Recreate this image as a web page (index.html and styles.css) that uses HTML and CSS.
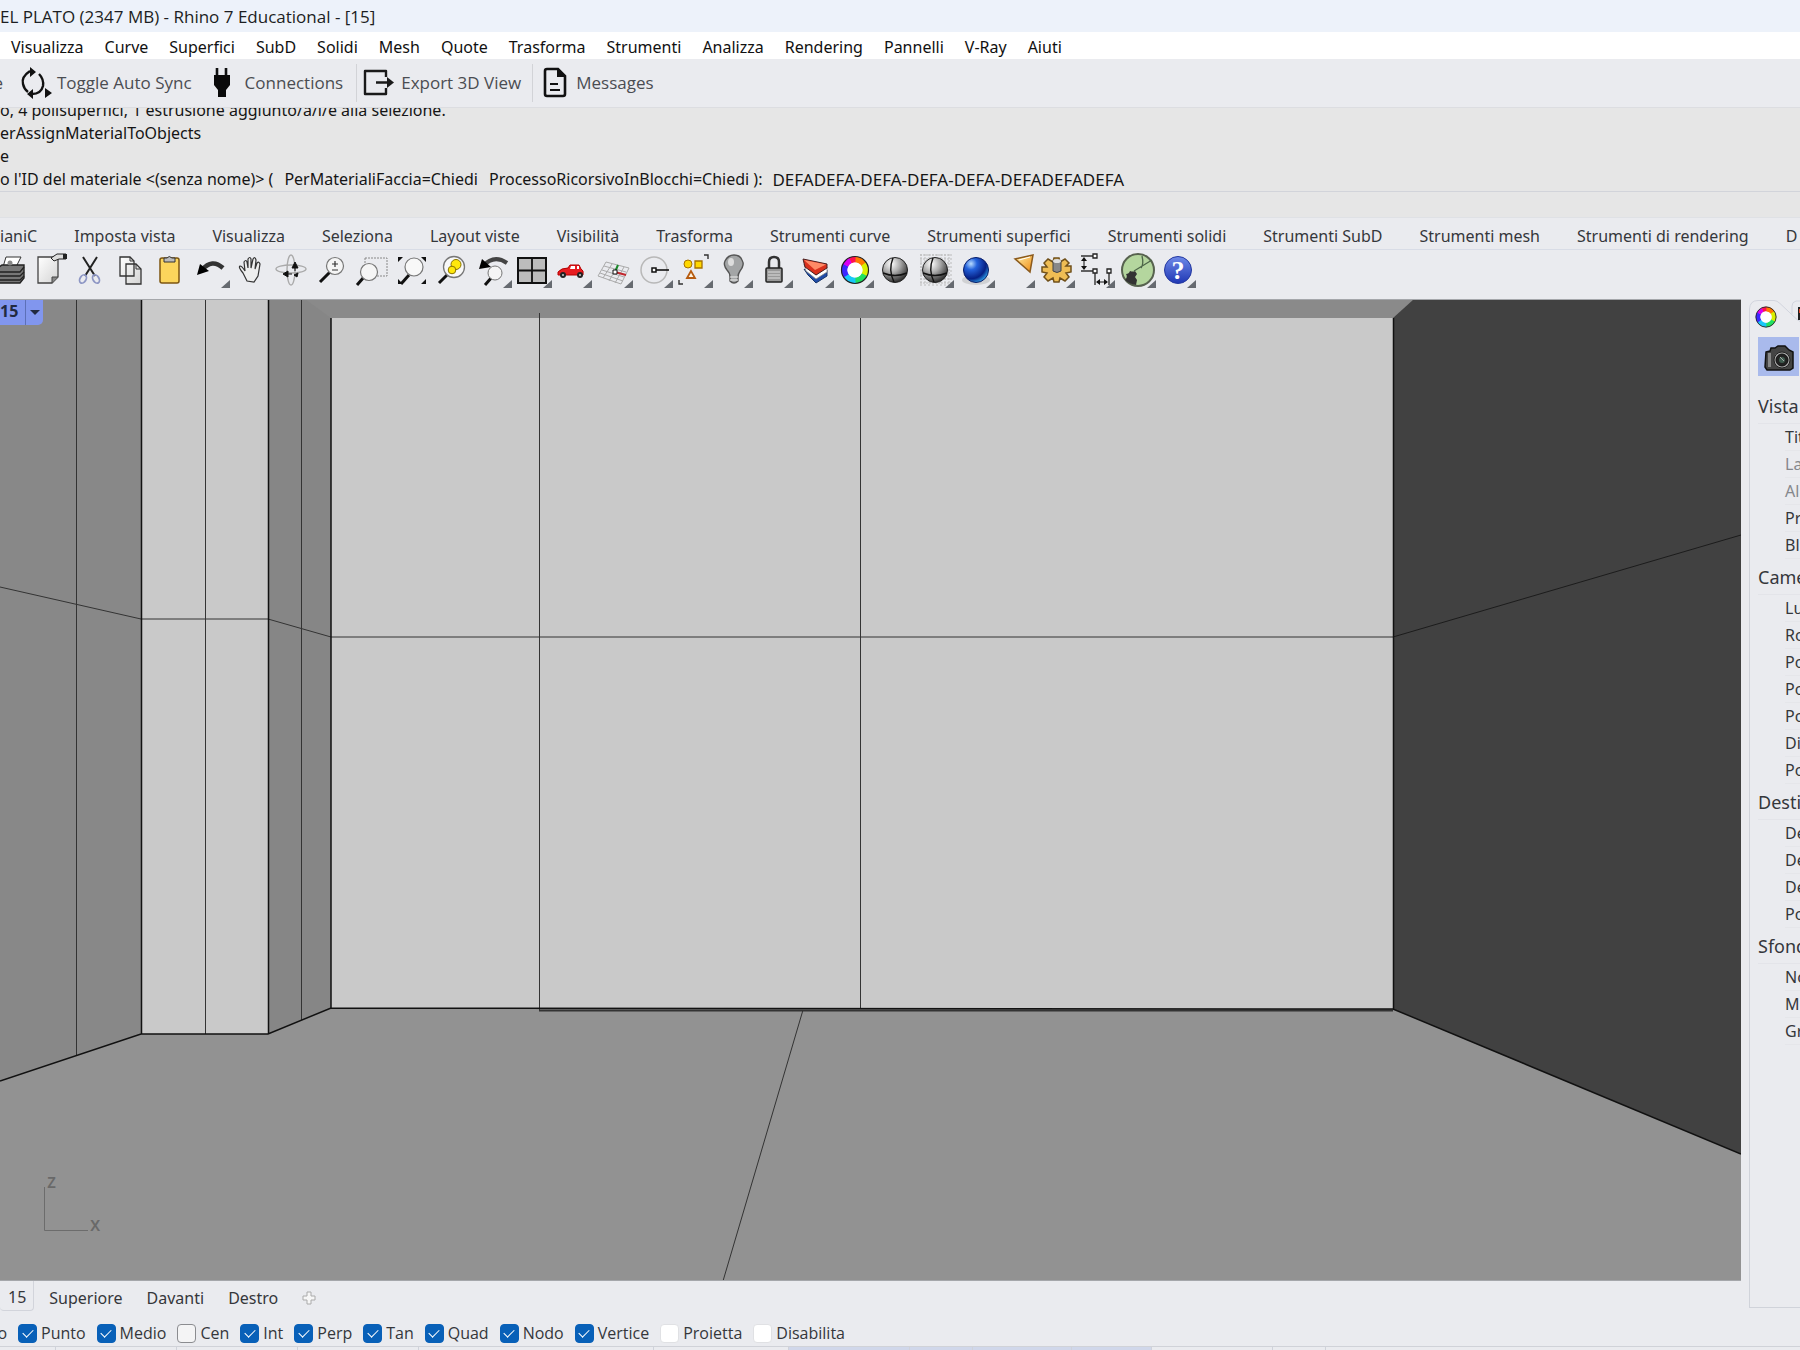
FILE: index.html
```html
<!DOCTYPE html>
<html lang="it">
<head>
<meta charset="utf-8">
<title>EL PLATO - Rhino 7 Educational</title>
<link rel="stylesheet" href="styles.css">
</head>
<body>
<svg class="defs" aria-hidden="true">
  <defs>
    <linearGradient id="paper" x2="1" y2="1"><stop offset="0" stop-color="#fff"/><stop offset="1" stop-color="#d4d4d4"/></linearGradient>
    <radialGradient id="grey" cx=".35" cy=".25" r=".8"><stop offset="0" stop-color="#fff"/><stop offset=".45" stop-color="#aaa"/><stop offset="1" stop-color="#222"/></radialGradient>
    <radialGradient id="blue" cx=".3" cy=".25" r=".8"><stop offset="0" stop-color="#b8dcff"/><stop offset=".3" stop-color="#2462dc"/><stop offset=".75" stop-color="#062084"/><stop offset="1" stop-color="#2b9be4"/></radialGradient>
    <linearGradient id="help" y2="1" x2="0"><stop offset="0" stop-color="#6f8ae8"/><stop offset="1" stop-color="#1f37b4"/></linearGradient>
    <linearGradient id="gold" x2="1" y2="1"><stop offset="0" stop-color="#fff0a8"/><stop offset="1" stop-color="#f08a10"/></linearGradient>
    <symbol id="more" viewBox="0 0 40 40"><path d="M38 30v8h-9z" fill="#666a70"/></symbol>
    <symbol id="ball" viewBox="0 0 40 40"><circle cx="20" cy="20" r="12.5" fill="url(#grey)" stroke="#222"/><path d="M18 8q-5 12 1 24M8 23q12 5 24 0" fill="none" stroke="#111" stroke-width="1.4"/></symbol>
    <symbol id="wheel" viewBox="0 0 40 40">
      <g fill="none" stroke-width="6">
        <path d="M20 9.500A10.500 10.500 0 0 1 29.100 14.750" stroke="#ff7a00"/><path d="M28.600 14A10.500 10.500 0 0 1 29.100 25.250" stroke="#d8f000"/>
        <path d="M29.400 24.700A10.500 10.500 0 0 1 20 30.500" stroke="#22e060"/><path d="M20.500 30.500A10.500 10.500 0 0 1 10.900 25.250" stroke="#18c8f8"/>
        <path d="M11.200 25.800A10.500 10.500 0 0 1 10.900 14.750" stroke="#3c28ff"/><path d="M10.600 15.300A10.500 10.500 0 0 1 16 10.300" stroke="#d800f0"/><path d="M15.500 10.500A10.500 10.500 0 0 1 20.500 9.500" stroke="#ff1050"/>
      </g><circle cx="20" cy="20" r="13.500" fill="none" stroke="#222" stroke-width="1.200"/><circle cx="20" cy="20" r="7.500" fill="#fff"/>
    </symbol>
  </defs>
</svg>

<header class="titlebar">EL PLATO (2347 MB) - Rhino 7 Educational - [15]</header>

<nav class="menubar">
  <button>Visualizza</button><button>Curve</button><button>Superfici</button><button>SubD</button><button>Solidi</button><button>Mesh</button><button>Quote</button><button>Trasforma</button><button>Strumenti</button><button>Analizza</button><button>Rendering</button><button>Pannelli</button><button>V-Ray</button><button>Aiuti</button>
</nav>

<div class="syncbar">
  <span class="cut">e</span>
  <button class="sync">
    <svg width="34" height="34" viewBox="0 0 34 34"><g fill="none" stroke="#111" stroke-width="2.400"><path d="M11 5Q2 11 4 18q1 5 5 8M13 28q9 0 11-8 1-7-4-12"/></g><path d="M11 1l6 5-6 5zM14 23l-6 5 6 5zM26 22l7 5-7 5z" fill="#111"/></svg>
    Toggle Auto Sync</button>
  <button class="plug">
    <svg width="20" height="32" viewBox="0 0 20 32"><path d="M5 1v9M14 1v9" stroke="#111" stroke-width="2.600"/><path d="M2 8h16v10l-4 5v7H6v-7l-4-5z" fill="#0a0a0a"/></svg>
    Connections</button>
  <button class="export">
    <svg width="32" height="28" viewBox="0 0 32 28"><path d="M23 8V2H2v23h21v-6M13 13.500h14" fill="none" stroke="#1a1a1a" stroke-width="2.400" stroke-linejoin="round"/><path d="M24 8l7 5.500-7 5.500z" fill="#1a1a1a"/></svg>
    Export 3D View</button>
  <button class="messages">
    <svg width="24" height="34" viewBox="0 0 24 34"><path d="M4 3h11l7 7v18q0 2-2 2H4q-2 0-2-2V5q0-2 2-2z" fill="none" stroke="#111" stroke-width="2.600"/><path d="M14 3v8h8z" fill="#111"/><path d="M7 18h8M7 24h10" stroke="#111" stroke-width="2.200"/></svg>
    Messages</button>
</div>

<section class="console">
  <div class="history">
    <p>o, 4 polisuperfici, 1 estrusione aggiunto/a/i/e alla selezione.</p>
    <p>erAssignMaterialToObjects</p>
    <p>e</p>
    <p class="prompt"><span>o l'ID del materiale &lt;(senza nome)&gt; (</span> <span>PerMaterialiFaccia=Chiedi</span> <span>ProcessoRicorsivoInBlocchi=Chiedi ):</span> <span class="entry">DEFADEFA-DEFA-DEFA-DEFA-DEFADEFADEFA</span></p>
  </div>
</section>

<nav class="tabs">
  <button>ianiC</button><button>Imposta vista</button><button>Visualizza</button><button>Seleziona</button><button>Layout viste</button><button>Visibilità</button><button>Trasforma</button><button>Strumenti curve</button><button>Strumenti superfici</button><button>Strumenti solidi</button><button>Strumenti SubD</button><button>Strumenti mesh</button><button>Strumenti di rendering</button><button>D</button>
</nav>

<div class="tools">
  <div class="toolgrid">
  <button aria-label="Stampa"><svg viewBox="0 0 40 40"><path d="M12 17l3-10h15l-5 10" fill="#fff" stroke="#333"/><path d="M4 20l7-5h22v13l-4 5H4z" fill="#777" stroke="#222" stroke-width="1.400"/><path d="M4 22h25l4-5M4 26h25l4-4M4 30h25l4-4" fill="none" stroke="#222" stroke-width="1.300"/><circle cx="19" cy="13" r="2.500" fill="#888"/></svg></button>
  <button aria-label="Proprietà"><svg viewBox="0 0 40 40"><path d="M7 7h20v20l-6 6H7z" fill="url(#paper)" stroke="#444" stroke-width="1.300"/><path d="M27 27h-6v6" fill="#888" stroke="#444"/><path d="M20 8l6-4h9v5h-7l-5 2z" fill="#ddd" stroke="#222"/><path d="M32 4h4v5h-4z" fill="#222"/></svg></button>
  <button aria-label="Taglia"><svg viewBox="0 0 40 40"><path d="M12 7l12 19M26 7L14 26" stroke="#222" stroke-width="2"/><ellipse cx="12" cy="29" rx="3" ry="4.500" transform="rotate(30 12 29)" fill="none" stroke="#8d96c4" stroke-width="1.800"/><ellipse cx="25" cy="29" rx="3" ry="4.500" transform="rotate(-30 25 29)" fill="none" stroke="#8d96c4" stroke-width="1.800"/></svg></button>
  <button aria-label="Copia"><svg viewBox="0 0 40 40"><path d="M8 7h10l4 4v15H8zM14 14h10l5 5v15H14z" fill="url(#paper)" stroke="#333" stroke-width="1.300"/><path d="M18 7v4h4M24 14v5h5" fill="none" stroke="#333"/></svg></button>
  <button aria-label="Incolla"><svg viewBox="0 0 40 40"><rect x="8" y="8" width="19" height="25" rx="2" fill="#fbd55c" stroke="#7d5610" stroke-width="1.500"/><path d="M12 12V8h3q2-3 5 0h3v4z" fill="#bbb" stroke="#333"/></svg></button>
  <button aria-label="Annulla"><svg viewBox="0 0 40 40"><path d="M10 20Q20 8 31 18" fill="none" stroke="#333" stroke-width="4.500"/><path d="M5 25l3-11 9 7z" fill="#000"/><use href="#more"/></svg></button>
  <button aria-label="Panoramica"><svg viewBox="0 0 40 40"><path d="M15 31l-4-8q-5-6-3-7 2 0 5 5l-1-9q2-3 3 0l1 6V9q2-3 3 0v9l2-9q2-3 3 1l-1 9 2-6q2-2 3 1l-2 12-4 6z" fill="#eee" stroke="#333" stroke-width="1.200"/></svg></button>
  <button aria-label="Ruota vista"><svg viewBox="0 0 40 40"><g fill="none" stroke="#aaa" stroke-width="1.400"><ellipse cx="18" cy="20" rx="4" ry="15"/><ellipse cx="18" cy="19" rx="15" ry="4"/></g><path d="M22 12l3 6h-6zM22 18v3M10 24l5-3v6zM15 24h4M21 25l4-2-1 4z" fill="#111" stroke="#111"/></svg></button>
  <button aria-label="Zoom"><svg viewBox="0 0 40 40"><path d="M17 22L7 32" stroke="#111" stroke-width="3"/><circle cx="22" cy="16" r="8.500" fill="#f5f5f5" stroke="#777" stroke-width="1.200"/><path d="M22 11v6M19 14h6M19 20h6" stroke="#333" stroke-width="1.200"/></svg></button>
  <button aria-label="Zoom finestra"><svg viewBox="0 0 40 40"><path d="M12 8h22v18H12z" fill="none" stroke="#888" stroke-dasharray="2 1"/><path d="M11 27l-7 8" stroke="#111" stroke-width="3"/><circle cx="16" cy="22" r="8.500" fill="#f5f5f5" stroke="#777" stroke-width="1.200"/></svg></button>
  <button aria-label="Zoom estensione"><svg viewBox="0 0 40 40"><path d="M16 25l-8 9" stroke="#111" stroke-width="3"/><circle cx="21" cy="17" r="9" fill="#f8f8f8" stroke="#777" stroke-width="1.200"/><path d="M5 7h5l-5 5zM28 7h5v5zM5 29v5h5zM33 29v5h-5z" fill="#111"/></svg></button>
  <button aria-label="Zoom selezione"><svg viewBox="0 0 40 40"><path d="M13 25l-8 8" stroke="#111" stroke-width="3"/><circle cx="20" cy="17" r="10.500" fill="#f8f8f8" stroke="#777" stroke-width="1.300"/><circle cx="22" cy="14.500" r="5" fill="#ffe80c" stroke="#887200"/><circle cx="18" cy="20" r="3.800" fill="#ffe80c" stroke="#887200"/></svg></button>
  <button aria-label="Vista precedente"><svg viewBox="0 0 40 40"><path d="M9 16Q20 4 33 13" fill="none" stroke="#444" stroke-width="4"/><path d="M5 19l3-10 9 8z" fill="#000"/><path d="M18 27l-7 8" stroke="#111" stroke-width="3"/><circle cx="21" cy="23" r="7" fill="#f5f5f5" stroke="#777"/><use href="#more"/></svg></button>
  <button aria-label="4 viste"><svg viewBox="0 0 40 40"><path d="M4 8h28v25H4z" fill="#bcbcbc" stroke="#111" stroke-width="2"/><path d="M18 8v25M4 20.500h28" stroke="#111" stroke-width="1.800"/><use href="#more"/></svg></button>
  <button aria-label="Veicolo"><svg viewBox="0 0 40 40"><path d="M4 22q3-4 10-4l2-3h9l2 4q3 1 2 6H4z" fill="#e81c20" stroke="#b40000"/><path d="M17 16h4v3h-5zM23 16h2v3h-2z" fill="#fff"/><circle cx="9" cy="25" r="3" fill="#222"/><circle cx="26" cy="25" r="3" fill="#222"/><circle cx="9" cy="25" r="1" fill="#ccc"/><circle cx="26" cy="25" r="1" fill="#ccc"/><use href="#more"/></svg></button>
  <button aria-label="Piano di costruzione"><svg viewBox="0 0 40 40"><path d="M11 12l23 6-8 16L3 26zM17 14l-9 14M23 15l-9 16M29 17l-9 16M9 16l22 6M7 20l22 7M5 23l23 8" fill="none" stroke="#aaa"/><path d="M20 22l3-7" stroke="#1b8b2b" stroke-width="2"/><path d="M20 22l11 3" stroke="#c1272d" stroke-width="2"/><path d="M18 20h4v4h-4z" fill="#fff" stroke="#111"/><use href="#more"/></svg></button>
  <button aria-label="Snap polare"><svg viewBox="0 0 40 40"><circle cx="19" cy="20" r="13" fill="none" stroke="#b8b8b8" stroke-width="1.500"/><path d="M20 20h14" stroke="#111" stroke-width="1.600"/><path d="M17 18h4v4h-4z" fill="#fff" stroke="#111" stroke-width="1.500"/><use href="#more"/></svg></button>
  <button aria-label="Selezione"><svg viewBox="0 0 40 40"><circle cx="13" cy="14" r="4" fill="#ffd800" stroke="#a67100"/><path d="M20 11h7v7h-7z" fill="#ffd800" stroke="#a67100" stroke-width="1.300"/><path d="M16 21l-4 7h8z" fill="#fff4e0" stroke="#b65b10" stroke-width="1.800"/><path d="M29 5h4v4M4 30v4h4" fill="none" stroke="#333" stroke-width="1.400"/><use href="#more"/></svg></button>
  <button aria-label="Mostra"><svg viewBox="0 0 40 40"><g transform="translate(-1 0)"><path d="M16 27q0-4-3-7-4-5-2-9 3-6 9-6t8 5q3 5-2 11-2 3-2 6v4q-4 4-8 0z" fill="#a3a5a6" stroke="#555" stroke-width="1.400"/><path d="M16 27h8M16 30h8" stroke="#eee"/><ellipse cx="17" cy="12" rx="3" ry="4" fill="#ddd"/></g><use href="#more"/></svg></button>
  <button aria-label="Blocca"><svg viewBox="0 0 40 40"><path d="M14 18v-6q0-5 5-5t5 5v6" fill="none" stroke="#333" stroke-width="2.500"/><rect x="11" y="18" width="16" height="14" rx="1" fill="#999" stroke="#222" stroke-width="1.500"/><path d="M13 22h12M13 25h12M13 28h12" stroke="#ddd"/><use href="#more"/></svg></button>
  <button aria-label="Livelli"><svg viewBox="0 0 40 40"><path d="M8 19l12 9 11-8v6l-11 7-8-8z" fill="#204ca8" stroke="#163469"/><path d="M8 14l12 11 11-8v5l-11 7-10-8z" fill="#fff" stroke="#888" stroke-width=".8"/><path d="M7 9l24 5v4l-11 7L9 17z" fill="#d9301c" stroke="#4a2020"/><path d="M8 10l22 4.500L19 20z" fill="#ff8a66"/><use href="#more"/></svg></button>
  <button aria-label="Colori"><svg viewBox="0 0 40 40"><g transform="translate(-1 0)"><use href="#wheel"/></g><use href="#more"/></svg></button>
  <button aria-label="Ombreggia"><svg viewBox="0 0 40 40"><g transform="translate(-1 0)"><use href="#ball"/></g></svg></button>
  <button aria-label="Ombreggia selezione"><svg viewBox="0 0 40 40"><path d="M5 4v32M9 4v32M13 4v32M17 4v32M21 4v32M25 4v32M29 4v32M33 4v32M4 5h32M4 9h32M4 13h32M4 17h32M4 21h32M4 25h32M4 29h32M4 33h32" stroke="#bbb" stroke-dasharray="2 1"/><g transform="translate(-1 0)"><use href="#ball"/></g><use href="#more"/></svg></button>
  <button aria-label="Rendering"><svg viewBox="0 0 40 40"><ellipse cx="19" cy="30" rx="14" ry="5" fill="#aaa" opacity=".4"/><circle cx="19" cy="20" r="12.500" fill="url(#blue)" stroke="#071c68"/><use href="#more"/></svg></button>
  <button aria-label="Luce"><svg viewBox="0 0 40 40"><path d="M18 9l18-4-3 17z" fill="url(#gold)" stroke="#8b5a1d" stroke-width="1.500"/><path d="M22 10l11-3" stroke="#fff"/><use href="#more"/></svg></button>
  <button aria-label="Opzioni"><svg viewBox="0 0 40 40"><path d="M17 8h5l1 4 5-3 4 4-3 3h5v6l-5 1 3 4-4 4-5-3-1 4h-5l-1-4-5 3-4-4 3-4-5-1v-5h5l-3-4 4-4 5 3z" fill="#efbd54" stroke="#70501a" stroke-width="1.500"/><path d="M16 11q4-3 8 0v10q-4 3-8 0z" fill="#888" stroke="#444"/><ellipse cx="20" cy="11" rx="4" ry="2" fill="#ddd"/><use href="#more"/></svg></button>
  <button aria-label="Quote"><svg viewBox="0 0 40 40"><path d="M4 6h12M4 21h12M18 23v12M32 23v12" stroke="#333" stroke-width="1.400"/><path d="M16 4h4v4h-4zM16 19h4v4h-4zM30 19h4v4h-4z" fill="#fff" stroke="#222" stroke-width="1.300"/><path d="M7 9v10M20 32h10" stroke="#111"/><path d="M7 7l3 4H4zM7 20l3-4H4zM19 32l4-3v6zM31 32l-4-3v6z" fill="#111"/><use href="#more"/></svg></button>
  <button aria-label="Grasshopper"><svg viewBox="0 0 40 40"><circle cx="20" cy="20" r="16" fill="#b4d69e" stroke="#57624f" stroke-width="2"/><path d="M7 30q3-3 1-6 3 0 4-3 3 1 5 0l2 3-2 3 2 3-1 5q-7-1-11-5z" fill="#333"/><path d="M16 21L34 10M24 6q2 8-1 12" fill="none" stroke="#4c6548" stroke-width="1.300"/><use href="#more"/></svg></button>
  <button aria-label="Guida"><svg viewBox="0 0 40 40"><circle cx="20" cy="20" r="13.500" fill="url(#help)" stroke="#2438a0"/><text x="20" y="29" text-anchor="middle" font-family="Liberation Serif, serif" font-weight="700" font-size="26" fill="#fff">?</text><use href="#more"/></svg></button>
  </div>
</div>

<main class="workspace">
  <section class="viewport">
    <svg class="scene" viewBox="0 1 1741 980" preserveAspectRatio="xMinYMin slice" role="img" aria-label="Vista prospettica 15">
      <path d="M0 0h1741v982H0z" fill="#929292"/>
      <path d="M268 0h1146l-21 19H331z" fill="#8a8a8a"/>
      <path d="M0 0h141v735L0 782z" fill="#888"/>
      <path d="M141 0h127v735H141z" fill="#c9c9c9"/>
      <path d="M268 0h37l26 19v690l-63 26z" fill="#868686"/>
      <path d="M331 19h1062v691H331z" fill="#c9c9c9"/>
      <path d="M1414 0h327v855l-348-145V19z" fill="#414141"/>
      <g fill="none" stroke="#333">
        <path d="M76.500 0v756M205.500 0v735M301.500 0v721M539.500 14v697M860.500 19v690"/>
        <path d="M0 288l141 32h127l63 18h1062M803 711l-80 271"/>
        <path d="M539 711.500h854" stroke-width="2"/>
      </g>
      <path d="M1393 338l348-102" stroke="#1c1c1c"/>
      <path d="M0 782l141-47h127l63-26 1062 1 348 145M141.500 0v735M268.500 0v735M331 19v690M1393.500 19v691" fill="none" stroke="#111" stroke-width="1.500"/>
      <path d="M44.500 888v43.500H88" fill="none" stroke="#6c6c6c"/>
      <g class="axis"><text x="47" y="889">z</text><text x="90" y="932">x</text></g>
    </svg>
    <div class="viewlabel"><span>15</span><button aria-label="Menu vista"></button></div>
  </section>
  <aside class="panel">
    <svg class="paneltabs" width="51" height="38" viewBox="0 0 51 38"><path d="M.500 38V10Q1 1.500 9 1.500h16q3 0 6 3l17 16 3 2M43 15V7q0-4 4-5h4" fill="none" stroke="#d2d5de"/><use href="#wheel" x="2" y="3" width="30" height="30"/><path d="M49 8h2v13h-2z" fill="#222"/><path d="M50 10h1v4h-1z" fill="#e84a28"/></svg>
    <div class="panelbody">
      <button class="camera" aria-label="Vista"><svg width="34" height="32" viewBox="0 0 34 32"><path d="M4 11l4-1 1-3h4l3-2h7l4 4 4 2v16l-3 2H5l-2-3z" fill="#444" stroke="#111" stroke-width="1.500"/><path d="M6 12h3v14H6z" fill="#888"/><circle cx="20" cy="19" r="8" fill="#aaa" stroke="#222"/><circle cx="20" cy="19" r="6" fill="#222" stroke="#111"/><circle cx="20" cy="19" r="3" fill="#405d50"/><path d="M18 16l4 4" stroke="#aaa"/></svg></button>
      <h2>Vista</h2>
      <ul><li>Tit</li><li class="off">La</li><li class="off">Al</li><li>Pr</li><li>Bl</li></ul>
      <h2>Came</h2>
      <ul><li>Lu</li><li>Ro</li><li>Po</li><li>Po</li><li>Po</li><li>Di</li><li>Po</li></ul>
      <h2>Desti</h2>
      <ul><li>De</li><li>De</li><li>De</li><li>Po</li></ul>
      <h2>Sfond</h2>
      <ul><li>No</li><li>M</li><li>Gr</li></ul>
    </div>
  </aside>
  <nav class="viewtabs">
    <button class="current">15</button><button>Superiore</button><button>Davanti</button><button>Destro</button>
    <button aria-label="Nuova vista"><svg width="14" height="14" viewBox="0 0 14 14"><path d="M5 1h4v4h4v4H9v4H5V9H1V5h4z" fill="#f6f6f6" stroke="#aaa"/></svg></button>
  </nav>
</main>

<form class="osnap">
  <span class="cut">o</span>
  <label><input type="checkbox" checked>Punto</label>
  <label><input type="checkbox" checked>Medio</label>
  <label><input type="checkbox">Cen</label>
  <label><input type="checkbox" checked>Int</label>
  <label><input type="checkbox" checked>Perp</label>
  <label><input type="checkbox" checked>Tan</label>
  <label><input type="checkbox" checked>Quad</label>
  <label><input type="checkbox" checked>Nodo</label>
  <label><input type="checkbox" checked>Vertice</label>
  <label><input type="checkbox" class="flat">Proietta</label>
  <label><input type="checkbox" class="flat">Disabilita</label>
</form>
<footer class="status"><i></i><i></i><i></i><i></i><i></i><i></i><i class="on"></i><i class="on"></i><i class="on"></i><i class="on"></i><i></i><i></i></footer>
</body>
</html>
```
FILE: styles.css
```css
* { box-sizing: border-box; }
body {
  margin: 0;
  min-height: 100vh;
  display: flex;
  flex-direction: column;
  overflow: hidden;
  background: #eaebef;
  color: #35373b;
  font: 16px/24px "Noto Sans", "Open Sans", sans-serif;
}
button {
  flex: none;
  margin: 0;
  padding: 0;
  border: 0;
  background: none;
  color: inherit;
  font: inherit;
  white-space: nowrap;
}
svg { display: block; }
.defs { position: absolute; width: 0; height: 0; }

.titlebar { height: 32px; padding-top: 5px; background: #edf2fa; color: #1c1e22; font-family: "Open Sans", sans-serif; font-size: 17px; white-space: nowrap; }
.menubar { display: flex; gap: 21px; height: 27px; padding: 3px 0 0 11px; background: #fff; color: #111; }

.syncbar { display: flex; align-items: center; height: 49px; border-bottom: 1px solid #dcdde1; color: #4b4d52; font-family: "Open Sans", sans-serif; font-size: 17px; }
.syncbar button { display: flex; align-items: center; }
.cut { display: flex; flex: none; justify-content: flex-end; }
.syncbar .cut { width: 3px; margin-right: 16px; }
.sync { gap: 4px; }
.plug { gap: 13px; }
.syncbar .plug { margin: 0 13px 0 20px; }
.export, .messages { height: 38px; }
.syncbar .export { gap: 6px; padding: 0 11px 0 6px; border-left: 1px solid #d2d3d7; }
.syncbar .messages { gap: 9px; padding-left: 10px; border-left: 1px solid #d2d3d7; }

.console { height: 110px; background: #e6e6e6; border-bottom: 1px solid #dfe1e5; color: #151515; }
.history { display: flex; flex-direction: column; justify-content: flex-end; height: 84px; overflow: hidden; border-bottom: 1px solid #d2d4da; }
.history p { flex: none; margin: 0; line-height: 23px; white-space: nowrap; }
.history .prompt { display: flex; gap: 11px; }
.prompt .entry { margin-left: -1px; font-size: 17px; }

.tabs { display: flex; gap: 37px; height: 32px; padding-top: 5px; border-bottom: 1px solid #d8dce6; overflow: hidden; }
.tools { height: 49px; overflow: hidden; }
.toolgrid { display: grid; grid-template-columns: repeat(30, 1fr); width: 1207px; margin-left: -9px; }
.toolgrid svg { width: 40px; height: 40px; }

.workspace { flex: 1; display: grid; grid-template-columns: minmax(0, 1fr) 51px; grid-template-rows: minmax(0, 1fr) 27px 10px; column-gap: 8px; }
.viewport { grid-column: 1; grid-row: 1; position: relative; overflow: hidden; border: solid #a5a7ab; border-width: 1px 0; }
.scene { width: 100%; height: 100%; }
.axis { fill: #696969; font-size: 19px; font-weight: 500; }
.viewlabel { position: absolute; top: 0; left: 0; display: flex; height: 25px; border-radius: 0 0 5px 0; background: #8196ee; color: #222a40; font-weight: 700; line-height: 22px; }
.viewlabel span { width: 26px; border-right: 1px solid #5c70b8; }
.viewlabel button { display: flex; width: 17px; justify-content: center; align-items: center; }
.viewlabel button::after { content: ""; border: 5px solid transparent; border-top-color: #222a40; border-bottom: 0; }

.panel { grid-column: 2; grid-row: 1 / 3; display: flex; flex-direction: column; overflow: hidden; }
.panelbody { flex: 1; padding-left: 8px; border: solid #d0d3da; border-width: 0 0 1px 1px; }
.camera { display: flex; width: 41px; height: 39px; justify-content: center; align-items: center; background: #a9baec; }
.panel h2 { height: 36px; margin: 0; padding-top: 2px; border-bottom: 1px solid #e3e4e9; font-size: 18px; font-weight: 400; line-height: 32px; }
.camera + h2 { margin-top: 12px; }
.panel ul { margin: 0 0 0 27px; padding: 0; list-style: none; }
.panel li { height: 27px; border-bottom: 1px solid #e5e6ea; line-height: 26px; white-space: nowrap; }
.panel .off { color: #85878c; }

.viewtabs { grid-column: 1; grid-row: 2 / 4; display: flex; align-items: center; gap: 24px; }
.viewtabs .current { align-self: flex-start; margin-right: -9px; height: 30px; padding: 3px 7px 0 8px; border: solid #d2d4db; border-width: 0 1px 1px 0; border-radius: 0 0 4px 4px; }
.viewtabs button { padding-bottom: 4px; }

.osnap { display: flex; align-items: center; gap: 11px; height: 28px; padding-top: 2px; font-family: "Open Sans", "Noto Sans", sans-serif; }
.osnap .cut { width: 7px; }
.osnap label { display: flex; align-items: center; gap: 4px; }
.osnap input { appearance: none; display: grid; place-items: center; width: 19px; height: 19px; margin: 0; border: 1px solid #8b8c90; border-radius: 4px; background: #f4f4f5; }
.osnap input:checked { border-color: #0860b8; background: #0860b8; }
.osnap input:checked::after { content: ""; width: 9px; height: 5px; margin-bottom: 3px; border: solid #fff; border-width: 0 0 1px 1px; rotate: -45deg; }
.osnap .flat { border-color: #e0e1e4; background: #fff; }

.status { display: grid; grid-template-columns: 56px 121px 121px 121px 235px 135px 121px 63px 99px 80px 121px 53px; height: 4px; border-top: 1px solid #d0d2d8; }
.status i { border-right: 1px solid #cfd2da; }
.status .on { background: #d0d7ea; }
```
